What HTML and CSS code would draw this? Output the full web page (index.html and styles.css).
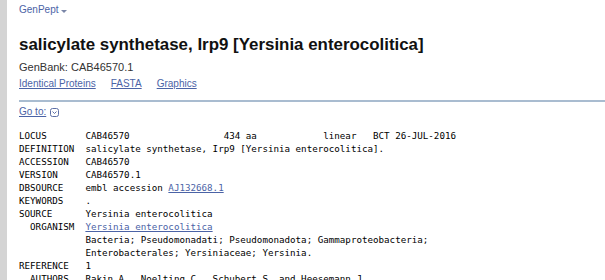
FILE: index.html
```html
<!DOCTYPE html>
<html lang="en">
<head>
    <meta charset="UTF-8">
    <meta name="viewport" content="width=device-width, initial-scale=1.0">
    <title>salicylate synthetase, Irp9 [Yersinia enterocolitica] - Protein - NCBI</title>
    <link rel="stylesheet" href="styles.css">
</head>
<body>
    <div class="page">
        <div class="content">
            <div class="db">
                <a href="#">GenPept</a>
                <span class="caret"></span>
            </div>
            <h1>salicylate synthetase, Irp9 [Yersinia enterocolitica]</h1>
            <p class="acc">GenBank: CAB46570.1</p>
            <p class="links">
                <a href="#">Identical Proteins</a>
                <a href="#">FASTA</a>
                <a href="#">Graphics</a>
            </p>
            <hr class="rule">
            <div class="goto">
                <a href="#">Go to:</a>
                <svg class="goto-icon" width="9" height="9" viewBox="0 0 9 9">
                    <rect x="0.5" y="0.5" width="8" height="8" rx="2" fill="none" stroke="#5d6fa6"/>
                    <path d="M2.5 3.5 L4.5 5.5 L6.5 3.5" fill="none" stroke="#5d6fa6" stroke-width="1"/>
                </svg>
            </div>
<pre class="record">LOCUS       CAB46570                 434 aa            linear   BCT 26-JUL-2016
DEFINITION  salicylate synthetase, Irp9 [Yersinia enterocolitica].
ACCESSION   CAB46570
VERSION     CAB46570.1
DBSOURCE    embl accession <a href="#">AJ132668.1</a>
KEYWORDS    .
SOURCE      Yersinia enterocolitica
  ORGANISM  <a href="#">Yersinia enterocolitica</a>
            Bacteria; Pseudomonadati; Pseudomonadota; Gammaproteobacteria;
            Enterobacterales; Yersiniaceae; Yersinia.
REFERENCE   1
  AUTHORS   Rakin,A., Noelting,C., Schubert,S. and Heesemann,J.
</pre>
        </div>
    </div>
</body>
</html>
```

FILE: styles.css
```css
* {
    margin: 0;
    padding: 0;
    box-sizing: border-box;
}
body {
    font-family: 'Liberation Sans', Arial, sans-serif;
    background-color: #fff;
    color: #000;
}
a {
    color: #4b63a6;
}
.page {
    border-left: 7px solid #d4d4d4;
    height: 280px;
    overflow: hidden;
}
.content {
    padding-left: 12px;
}
.db {
    padding-top: 3px;
    font-size: 10px;
    line-height: 14px;
    display: flex;
    align-items: center;
    gap: 3px;
}
.db a {
    text-decoration: none;
}
.caret {
    width: 0;
    height: 0;
    border-left: 3px solid transparent;
    border-right: 3px solid transparent;
    border-top: 3px solid #7a86a8;
    margin-top: 2px;
}
h1 {
    margin-top: 18px;
    font-size: 16.9px;
    line-height: 20px;
    font-weight: bold;
    color: #111;
}
.acc {
    margin-top: 5px;
    font-size: 11px;
    line-height: 14px;
    color: #333;
}
.links {
    margin-top: 3px;
    font-size: 10px;
    line-height: 14px;
    display: flex;
    gap: 15px;
}
.rule {
    margin-top: 9px;
    border: none;
    height: 2px;
    background-color: #a9bcd0;
}
.goto {
    margin-top: 3px;
    font-size: 10px;
    line-height: 14px;
    display: flex;
    align-items: center;
    gap: 4px;
}
.goto-icon {
    display: block;
    margin-top: 1px;
}
.record {
    margin-top: 10px;
    font-family: 'DejaVu Sans Mono', 'Liberation Mono', monospace;
    font-size: 9.2px;
    line-height: 13px;
    color: #000;
}
```
